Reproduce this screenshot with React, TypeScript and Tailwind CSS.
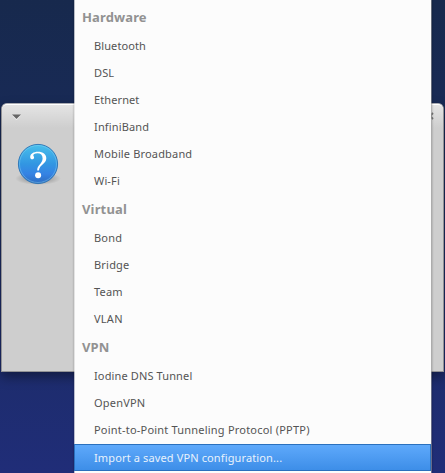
const groups = [
  {
    title: "Hardware",
    tracking: "tracking-[0.12px]",
    items: [
      { label: "Bluetooth", tracking: "tracking-[0.1px]" },
      { label: "DSL", tracking: "tracking-[0.1px]" },
      { label: "Ethernet", tracking: "tracking-[0.1px]" },
      { label: "InfiniBand", tracking: "tracking-[0.15px]" },
      { label: "Mobile Broadband", tracking: "tracking-[0.16px]" },
      { label: "Wi-Fi", tracking: "tracking-[0.15px]" },
    ],
  },
  {
    title: "Virtual",
    tracking: "tracking-[0.15px]",
    items: [
      { label: "Bond", tracking: "tracking-[0.2px]" },
      { label: "Bridge", tracking: "tracking-[0.2px]" },
      { label: "Team", tracking: "tracking-[0.2px]" },
      { label: "VLAN", tracking: "tracking-[0.25px]" },
    ],
  },
  {
    title: "VPN",
    tracking: "tracking-[0.1px]",
    items: [
      { label: "Iodine DNS Tunnel", tracking: "tracking-[0.13px]" },
      { label: "OpenVPN", tracking: "tracking-[0.2px]" },
      { label: "Point-to-Point Tunneling Protocol (PPTP)", tracking: "tracking-[0.21px]" },
    ],
  },
];

function QuestionIcon() {
  return (
    <svg width="48" height="48" viewBox="0 0 48 48" className="block">
      <defs>
        <linearGradient id="ball" x1="0" y1="0" x2="0" y2="1">
          <stop offset="0" stopColor="#48c0ec" />
          <stop offset="0.5" stopColor="#3296e2" />
          <stop offset="0.75" stopColor="#3583e4" />
          <stop offset="1" stopColor="#2d6cc0" />
        </linearGradient>
        <radialGradient id="shade">
          <stop offset="0.5" stopColor="#000" stopOpacity="0.2" />
          <stop offset="1" stopColor="#000" stopOpacity="0" />
        </radialGradient>
      </defs>
      <ellipse cx="24" cy="38.5" rx="23" ry="6.5" fill="url(#shade)" />
      <circle cx="24" cy="24" r="19.6" fill="url(#ball)" stroke="#2872b4" strokeWidth="0.9" />
      <circle cx="24" cy="24" r="18.5" fill="none" stroke="#8fd6f5" strokeOpacity="0.4" />
      <path
        d="M16.2 17C16.2 13.8 19.4 11.7 24 11.7C29 11.7 32.3 14.2 32.3 18.2C32.3 24.2 25.6 24.2 24.9 30.6H23.2C22.9 24.8 28.6 23.8 28.6 18.4C28.6 15 26.6 13.2 23.6 13.2C20.6 13.2 19 14.3 19.3 15.4C19.6 16.1 20.1 16.5 20.1 17.4C20.1 18.5 19.3 19.3 18.2 19.3C17 19.3 16.2 18.4 16.2 17Z"
        fill="#fff"
      />
      <circle cx="24.1" cy="35.3" r="3" fill="#fff" />
    </svg>
  );
}

function Dialog() {
  return (
    <div className="absolute left-[1px] top-[103px] h-[269px] w-[443px] rounded-t-[6px] border border-[#929295] border-t-[#a9abb2] bg-[#cecece] shadow-[0_5px_12px_rgba(0,0,0,0.4)]">
      <div className="flex h-[24px] items-center justify-between rounded-t-[5px] border-t border-white bg-linear-to-b from-[#e4e4e4] to-[#cecece] pl-[10px] pr-[9px]">
        <svg width="9" height="6" viewBox="0 0 9 6">
          <path d="M0 1.5H9L4.5 6Z" fill="#f4f4f4" />
          <path d="M0 0.5H9L4.5 5Z" fill="#666" />
        </svg>
        <svg width="8" height="9" viewBox="0 0 8 9">
          <path d="M1 1L7 7M7 1L1 7" stroke="#777" strokeWidth="1.9" />
        </svg>
      </div>
      <div className="pl-[12px] pt-[12px]">
        <QuestionIcon />
      </div>
    </div>
  );
}

function TypeMenu() {
  return (
    <div className="absolute left-[74px] top-0 h-[473px] w-[358px] border-x border-l-white/70 border-r-[#b4b4b4]/50 bg-[#fcfcfc] bg-clip-padding pt-[3px] text-[11px] text-[#545454] shadow-[0_0_2px_rgba(0,0,0,0.3)]">
      {groups.map((group) => (
        <div key={group.title}>
          <div className={`flex h-[30px] items-center pb-[1px] pl-[7px] text-[13px] font-bold text-[#929292] ${group.tracking}`}>
            {group.title}
          </div>
          {group.items.map((item) => (
            <div key={item.label} className={`flex h-[27px] items-center pl-[19px] ${item.tracking}`}>
              {item.label}
            </div>
          ))}
        </div>
      ))}
      <div className="-ml-px flex h-[27px] items-center border border-[#2a70bd] bg-linear-to-b from-[#5ea9fb] to-[#3d8ee8] pl-[19px] pt-[2px] tracking-[0.13px] text-[#e8f2fc]">
        Import a saved VPN configuration...
      </div>
    </div>
  );
}

export default function App() {
  return (
    <div className="relative h-[473px] w-[445px] overflow-hidden bg-linear-to-b from-[#17294d] via-[#1a2b60] to-[#202d78] font-['Noto_Sans',sans-serif]">
      <Dialog />
      <TypeMenu />
    </div>
  );
}
